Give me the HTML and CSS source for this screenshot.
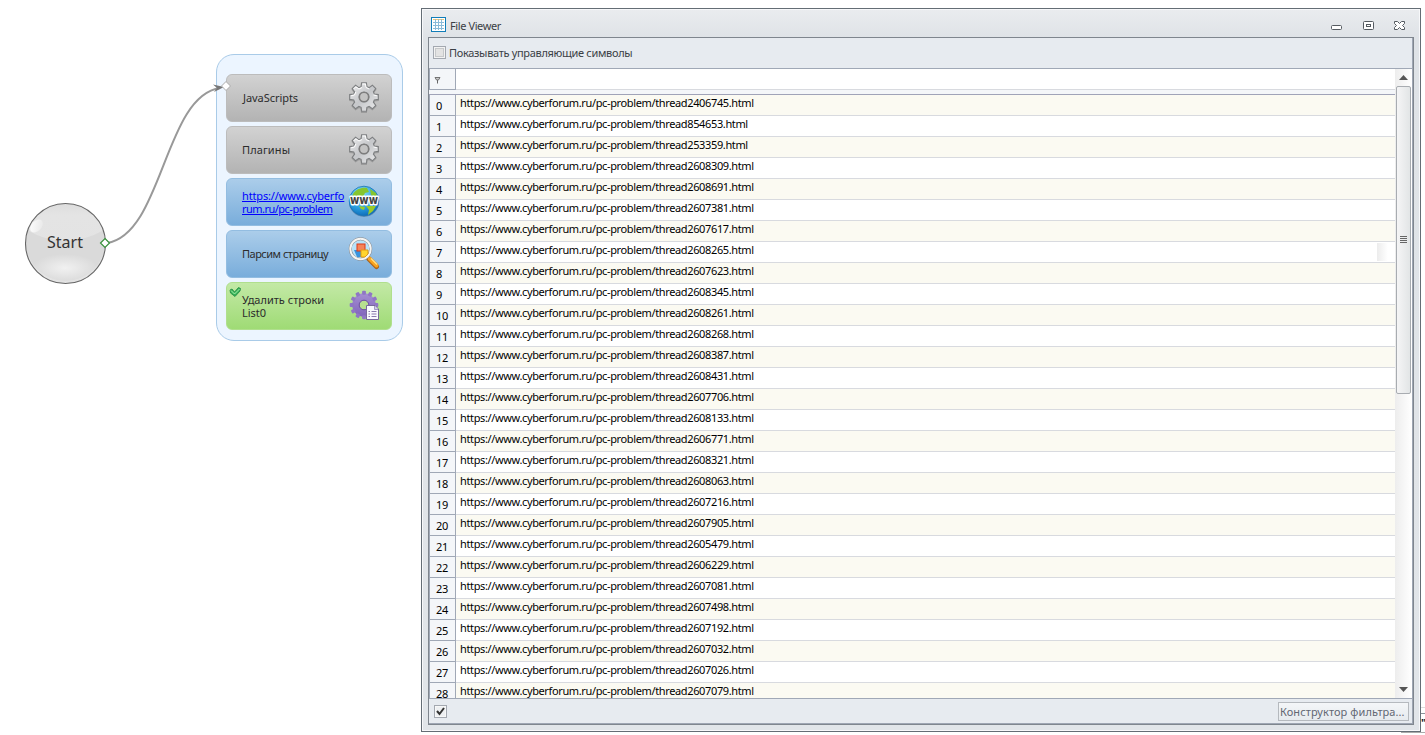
FILE: index.html
```html
<!DOCTYPE html>
<html lang="ru">
<head>
<meta charset="utf-8">
<title>File Viewer</title>
<link rel="stylesheet" href="styles.css">
</head>
<body>
<svg class="defs" width="0" height="0">
  <defs>
    <linearGradient id="steel" x1="0" y1="0" x2="1" y2="1"><stop offset="0" stop-color="#f0f0f1"/><stop offset=".5" stop-color="#c5c7ca"/><stop offset="1" stop-color="#eeeeef"/></linearGradient>
    <linearGradient id="violet" x1="0" y1="0" x2="0" y2="1"><stop offset="0" stop-color="#a58fd2"/><stop offset="1" stop-color="#8064bb"/></linearGradient>
    <radialGradient id="globe" cx=".4" cy=".25" r=".8"><stop offset="0" stop-color="#8fe0fa"/><stop offset=".6" stop-color="#2a9fe0"/><stop offset="1" stop-color="#0b66b4"/></radialGradient>
    <linearGradient id="ball" x1="0" y1="0" x2="0" y2="1"><stop offset="0" stop-color="#dddddd"/><stop offset=".15" stop-color="#e4e4e4"/><stop offset="1" stop-color="#e2e2e2"/></linearGradient>
    <radialGradient id="glow" cx=".5" cy=".5" r=".5"><stop offset="0" stop-color="#f1f1f1"/><stop offset="1" stop-color="#f1f1f1" stop-opacity="0"/></radialGradient>
    <linearGradient id="shine" x1="0" y1="0" x2="1" y2="1"><stop offset="0" stop-color="#fff"/><stop offset="1" stop-color="#e6e6e6"/></linearGradient>
    <path id="cog" d="M-2.4-14.3H2.4L2.9-10.3L5.1-9.4L8.4-11.8L11.8-8.4L9.4-5.1L10.3-2.9L14.3-2.4V2.4L10.3 2.9L9.4 5.1L11.8 8.4L8.4 11.8L5.1 9.4L2.9 10.3L2.4 14.3H-2.4L-2.9 10.3L-5.1 9.4L-8.4 11.8L-11.8 8.4L-9.4 5.1L-10.3 2.9L-14.3 2.4V-2.4L-10.3-2.9L-9.4-5.1L-11.8-8.4L-8.4-11.8L-5.1-9.4L-2.9-10.3ZM0-5A5 5 0 1 0 0 5A5 5 0 1 0 0-5Z" fill-rule="evenodd"/>
    <g id="gear"><use href="#cog" y="1" fill="none" stroke="#777" stroke-width="1.2" opacity=".45"/><use href="#cog" fill="url(#steel)" stroke="#7d7f81" stroke-width="1.1"/><path d="M-1.5-13H1.5L2-9.5L5.2-8M-12.8-1.3L-9.5-2L-8.2-5M12.8-1.3L9.5-2M-10.2-8.2L-8.2-10.2L-5-8L-2-9.5" fill="none" stroke="#fff"/><circle r="4.6" fill="#c3c3c3" stroke="#7d7d7d" stroke-width="1.4"/></g>
  </defs>
</svg>

<main class="canvas">
  <svg class="link" width="225" height="300" viewBox="0 0 225 300">
    <path d="M107 243C163 234 164 96 220 88" fill="none" stroke="#999" stroke-width="2"/>
    <path d="M224 87L213 84.5L217 88L214 92Z" fill="#777"/>
  </svg>
  <div class="start">
    <svg width="84" height="84" viewBox="0 0 84 84">
      <circle cx="41.5" cy="41.5" r="40" fill="url(#ball)"/>
      <path d="M3 28Q41 50 80 28A40 40 0 1 1 3 28" fill="#dadada"/>
      <ellipse cx="41" cy="66" rx="33" ry="14" fill="url(#glow)"/>
      <ellipse cx="12.5" cy="24" rx="7.5" ry="5" transform="rotate(-46 12.5 24)" fill="url(#shine)"/>
      <circle cx="41.5" cy="41.5" r="40" fill="none" stroke="#666" stroke-width="1.1"/>
    </svg>
    <span class="start-label">Start</span>
  </div>
  <svg class="port-out" width="12" height="12" viewBox="0 0 12 12"><path d="M6 1.5L10.5 6L6 10.5L1.5 6Z" fill="#fff" stroke="#37913a" stroke-width="1.2"/></svg>

  <section class="group">
    <div class="card gray"><span class="t js">JavaScripts</span><svg class="ico" viewBox="-17 -17 34 34"><use href="#gear"/></svg></div>
    <div class="card gray"><span class="t plg">Плагины</span><svg class="ico" viewBox="-17 -17 34 34"><use href="#gear"/></svg></div>
    <div class="card blue"><a class="t"><span class="u1">https://www.cyberfo</span><br><span class="u2">rum.ru/pc-problem</span></a>
      <svg class="ico" viewBox="-17 -17 34 34">
        <circle cy="1" r="15" fill="#315f85" opacity=".5"/><circle r="14.8" fill="url(#globe)" stroke="#1972b5" stroke-width=".8"/>
        <path d="M-11-7C-8-12-2-14 3-13L5-9L1-8L-1-4L-6-1L-8 1L-13 0Z" fill="#85c52f"/><path d="M6-12L12-8L14-2L11-3L7-6Z" fill="#85c52f"/>
        <path d="M-5 5L1 6L0 9L-3 8ZM2 5H12L9 10L4 14L5 9Z" fill="#9bca29"/>
        <text class="www" x="0" y="3" text-anchor="middle" textLength="28" lengthAdjust="spacingAndGlyphs">www</text>
      </svg></div>
    <div class="card blue"><span class="t prs">Парсим страницу</span>
      <svg class="ico" viewBox="-17 -17 34 34">
        <path d="M5 6L12.5 13.5" stroke="#a9631d" stroke-width="5" stroke-linecap="round"/><path d="M5.5 5.5L12.5 12.5" stroke="#f8a21e" stroke-width="4" stroke-linecap="round"/><path d="M7 5.5L13 11.5" stroke="#ffe08a" stroke-width="1.3"/>
        <circle cx="-3.5" cy="-4" r="10.2" fill="#b8e3fa" stroke="#85898e" stroke-width="3"/><circle cx="-3.5" cy="-4" r="10.2" fill="none" stroke="#f5f5f3" stroke-width="2"/>
        <path d="M-10-3H-3V4H-7Z" fill="#3993dd"/><rect x="-7" y="-9" width="8" height="7" fill="#f68459" stroke="#db3a19"/><path d="M-3-3H4V1L1 4H-3Z" fill="#ffd52e" stroke="#e39a13"/>
      </svg></div>
    <div class="card green"><svg class="tick" viewBox="0 0 12 12"><path d="M1 4L3 3L5.5 6L9.5 1.5L11.5 2.5L11 5L6 10.5L1.5 7Z" fill="#35b157" stroke="#208840" stroke-width=".8"/><path d="M2 4.5L5.5 8L10.5 3" fill="none" stroke="#a7efaa"/></svg><span class="t del"><span>Удалить строки</span><br>List0</span>
      <svg class="ico" viewBox="-17 -17 34 34">
        <circle r="11.8" fill="url(#violet)"/>
        <g fill="#8f76c5"><g id="teeth"><rect x="-1.9" y="-14.3" width="3.8" height="4" rx="1"/><rect x="-1.9" y="-14.3" width="3.8" height="4" rx="1" transform="rotate(30)"/><rect x="-1.9" y="-14.3" width="3.8" height="4" rx="1" transform="rotate(60)"/></g><use href="#teeth" transform="rotate(90)"/><use href="#teeth" transform="rotate(180)"/><use href="#teeth" transform="rotate(270)"/></g>
        <circle r="4.8" fill="#b7e18f" stroke="#6a4ba4"/>
        <path d="M2.5 .5H11L14.5 4V14.5H2.5Z" fill="#f9f9ff" stroke="#77699b"/><path d="M10.5 1V4.5H14" fill="#d1cce9" stroke="#9188b7" stroke-width=".8"/><path d="M4.5 6.5H6M7.5 6.5H12.5M4.5 9H6M7.5 9H12.5M4.5 11.5H6M7.5 11.5H12.5" stroke="#897bad"/>
      </svg></div>
  </section>
  <svg class="port-in" width="12" height="12" viewBox="0 0 12 12"><path d="M6 1.5L10.5 6L6 10.5L1.5 6Z" fill="#fff" stroke="#aaa"/></svg>
  <div class="behind"><span>ч"</span></div>
  <div class="behind-line"></div>

  <section class="window">
    <header class="titlebar">
      <svg width="15" height="15" viewBox="0 0 15 15"><rect x=".5" y=".5" width="14" height="14" fill="#fff" stroke="#117db8"/><path d="M2 2.5H13" stroke="#f6c56b"/><path d="M2 5.5H13M2 8.5H13M2 11.5H13M4.5 2V13M7.5 2V13M10.5 2V13" stroke="#8bbbd9"/></svg>
      <span class="title">File Viewer</span>
      <svg class="controls" width="80" height="14" viewBox="0 0 80 14" fill="#fff" stroke="#555b61"><rect x="3.5" y="6.5" width="10" height="4" rx="1"/><rect x="35.5" y="2.5" width="10" height="8" rx="1"/><rect x="38.5" y="5.5" width="4" height="2"/><path d="M66.5 2.5H69.5L71.5 4.5L73.5 2.5H76.5V4.5L74.5 6.5L76.5 8.5V10.5H73.5L71.5 8.5L69.5 10.5H66.5V8.5L68.5 6.5L66.5 4.5Z"/></svg>
    </header>
    <div class="frame">
      <div class="toolbar"><i class="check off"></i><span class="opt">Показывать управляющие символы</span></div>
      <div class="body">
        <div class="grid">
          <div class="filter"><div class="num"><svg width="7" height="8" viewBox="0 0 7 8"><path d="M3 4H4V7.5H3Z" fill="#666"/><path d="M1 1.5H6L4.5 4H2.5Z" fill="#ccc" stroke="#666" stroke-width=".9"/></svg></div><div class="fcell"></div></div>
          <div class="gap"></div>
          <div id="rows"></div>
          <div class="ghost"></div>
        </div>
        <div class="scroll">
          <svg width="9" height="5" viewBox="0 0 9 5"><path d="M0 5L4.5 0L9 5Z" fill="#555"/></svg>
          <div class="thumb"><i></i><i></i><i></i><i></i></div>
          <svg class="down" width="9" height="5" viewBox="0 0 9 5"><path d="M0 0L4.5 5L9 0Z" fill="#555"/></svg>
        </div>
      </div>
      <footer class="foot"><i class="check on"><svg width="9" height="9" viewBox="0 0 9 9"><path d="M1 4L3.5 7L8 1" fill="none" stroke="#333" stroke-width="2"/></svg></i><button class="build"><span>Конструктор фильтра...</span></button></footer>
    </div>
  </section>
</main>
<script src="app.js"></script>
</body>
</html>
```
FILE: styles.css
```css
* { box-sizing: border-box; }
body { margin: 0; background: #fff; font: 11px/13px "Noto Sans", "Open Sans", sans-serif; color: #000; overflow: hidden; }
.defs { position: absolute; }
.canvas { position: relative; width: 1425px; height: 735px; overflow: hidden; }
.link { position: absolute; left: 0; top: 0; z-index: 2; }
.start { position: absolute; left: 24px; top: 202px; width: 84px; height: 84px; }
.start svg { display: block; }
.start-label { position: absolute; left: 23px; top: 29px; font-size: 16px; line-height: 22px; color: #333; }
.port-out { position: absolute; left: 99px; top: 237px; z-index: 3; }
.port-in { position: absolute; left: 220px; top: 80px; z-index: 3; }
.group { position: absolute; left: 216px; top: 54px; width: 187px; height: 287px; border: 1px solid #a9cbe8; border-radius: 18px; background: #ecf5ff; padding: 19px 10px 0 9px; display: flex; flex-direction: column; gap: 4px; }
.card { position: relative; height: 48px; border-radius: 6px; display: flex; align-items: center; padding: 0 10px 0 15px; color: #2c2c2c; flex: none; }
.card .t { flex: 1; white-space: nowrap; min-width: 0; }
.card .js, .card .plg, .card .prs { margin-top: -2px; }
.js { letter-spacing: -0.05px; padding-left: 1px; }
.plg { letter-spacing: 0.1px; }
.prs { letter-spacing: -0.5px; }
.gray { background: linear-gradient(#d2d2d2, #b3b3b3); border: 1px solid #bcbcbc; }
.blue { background: linear-gradient(#abcdea, #79addb); border: 1px solid #93bde1; }
.green { background: linear-gradient(#c3e9a6, #9fdb75); border: 1px solid #b0df8e; }
.card a { color: #00f; text-decoration: underline; }
.u1 { letter-spacing: -0.15px; }
.u2 { letter-spacing: -0.52px; }
.www { font: bold 13px "DejaVu Sans", sans-serif; fill: #444; stroke: #fff; stroke-width: 3px; stroke-linejoin: round; paint-order: stroke; }
.ico { width: 34px; height: 34px; flex: none; margin-top: -2px; }
.tick { position: absolute; left: 2px; top: 3px; width: 12px; height: 12px; }
.behind { position: absolute; left: 1413px; top: 707px; width: 12px; height: 25px; border-top: 1px solid #ddd; overflow: hidden; color: #123; font-weight: bold; }
.behind span { display: block; margin: 5px 0 0 1px; padding-top: 2px; border-top: 1px solid #8d939a; }
.behind-line { position: absolute; left: 1401px; top: 732px; width: 24px; height: 1px; background: #aaa; }
.window { position: absolute; left: 421px; top: 8px; width: 1000px; height: 724px; border: 1px solid #646d75; background: linear-gradient(#eaecef, #dfe3e7 28px, #e1e5e9); box-shadow: inset 0 0 0 1px #f7f8fa; padding: 0 6px 6px; display: flex; flex-direction: column; }
.titlebar { height: 28px; display: flex; align-items: center; padding: 3px 6px 0 3px; color: #3b3f45; }
.titlebar > svg:first-child { margin-top: -1px; }
.title { margin: 1px 0 0 4px; letter-spacing: -0.4px; }
.controls { margin-left: auto; margin-top: 2px; }
.frame { flex: 1; min-height: 0; border: 1px solid #7f868e; box-shadow: inset -1px -1px #9ea6b3; display: flex; flex-direction: column; padding: 0 1px 1px 0; background: #e7ebf0; }
.toolbar { height: 31px; border-bottom: 1px solid #a0a8b6; display: flex; align-items: center; padding-left: 4px; color: #3b3f45; flex: none; }
.check { width: 13px; height: 13px; border: 1px solid #a3a8b0; background: #fff; display: flex; align-items: center; justify-content: center; flex: none; }
.off { box-shadow: inset 0 0 0 1px #f3f3f3, inset 0 0 0 2px #c6c8ca; background: #e3e3e3; margin-top: -1px; }
.on { background: #eef0f2; box-shadow: inset 0 0 0 1px #f8f8f8; }
.opt { margin-left: 3px; margin-top: -1px; white-space: nowrap; letter-spacing: -0.32px; }
.body { height: 629px; flex: none; display: flex; overflow: hidden; background: #fff; }
.grid { position: relative; flex: 1; height: 629px; overflow: hidden; }
.filter { height: 21px; display: flex; }
.num { width: 27px; flex: none; border-right: 1px solid #a0a8b6; border-bottom: 1px solid #a0a8b6; background: #f4f6f9; padding: 4px 0 0 6px; border-left: 1px solid #a0a8b6; line-height: 13px; letter-spacing: -0.2px; }
.filter .num { padding: 7px 0 0 4px; }
.filter .num svg { display: block; }
.fcell { flex: 1; border-bottom: 1px solid #d8dadf; }
.gap { height: 5px; background: #f4f6f9; border-bottom: 1px solid #a0a3b8; }
.row { height: 21px; display: flex; }
.url { flex: 1; border-bottom: 1px solid #d8dadf; padding: 1px 0 0 4px; white-space: nowrap; letter-spacing: -0.365px; }
.row:nth-child(odd) .url { background: #fbfaf2; }
.ghost { position: absolute; left: 948px; top: 174px; width: 18px; height: 18px; background: linear-gradient(90deg, #ececec, #fff 60%); }
.scroll { width: 17px; background: linear-gradient(90deg, #ededed, #fff); display: flex; flex-direction: column; align-items: center; padding-top: 6px; }
.scroll svg { flex: none; }
.thumb { margin-top: 6px; width: 15px; height: 308px; border: 1px solid #a8acb1; border-radius: 2px; background: linear-gradient(90deg, #f5f5f6, #e2e5e6); display: flex; flex-direction: column; align-items: center; justify-content: center; gap: 1px; padding-bottom: 2px; flex: none; }
.thumb i { width: 7px; height: 1px; background: #666; }
.down { margin-top: 293px; }
.foot { flex: 1; border-top: 1px solid #a0a8b6; display: flex; align-items: center; justify-content: space-between; padding: 0 3px 0 5px; }
.build { width: 131px; height: 19px; padding: 0 0 0 1px; margin: 0; border: 1px solid #b5b9be; background: linear-gradient(#f4f6f8, #e6eaee); font: inherit; color: #626773; text-align: left; white-space: nowrap; letter-spacing: 0.08px; }
```
FILE: app.js
```js
const ids = ["2406745","854653","253359","2608309","2608691","2607381","2607617","2608265","2607623","2608345","2608261","2608268","2608387","2608431","2607706","2608133","2606771","2608321","2608063","2607216","2607905","2605479","2606229","2607081","2607498","2607192","2607032","2607026","2607079"];
document.getElementById("rows").innerHTML = ids.map((id, i) =>
  `<div class="row"><div class="num">${i}</div><div class="url"><span>https://www.cyberforum.ru/pc-problem/thread${id}.html</span></div></div>`
).join("");
```
